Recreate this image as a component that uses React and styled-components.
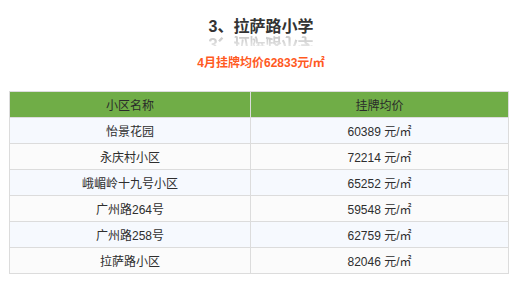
import React from "react";
import styled, { createGlobalStyle } from "styled-components";

const Global = createGlobalStyle`
  html, body { margin: 0; padding: 0; background: #fff; }
  body { font-family: "Liberation Sans", "Noto Sans CJK SC", sans-serif; }
`;

const Page = styled.div`
  width: 514px;
  padding: 17px 5px 0 9px;
  box-sizing: border-box;
`;

const Heading = styled.div`
  display: flex;
  flex-direction: column;
  align-items: center;
  padding-left: 4px;
`;

const Title = styled.div`
  font-size: 16px;
  line-height: 20px;
  font-weight: bold;
  color: #333;
`;

const Reflection = styled.div`
  margin-top: -4px;
  font-size: 16px;
  line-height: 20px;
  font-weight: bold;
  height: 13px;
  overflow: hidden;
  display: flex;
  align-items: flex-start;
  & > span {
    display: block;
    transform: scaleY(-1);
    color: #cdcdcd;
    -webkit-mask-image: linear-gradient(to top, rgba(0,0,0,1) 0%, rgba(0,0,0,1) 30%, rgba(0,0,0,0.6) 60%);
    mask-image: linear-gradient(to top, rgba(0,0,0,1) 0%, rgba(0,0,0,1) 30%, rgba(0,0,0,0.6) 60%);
  }
`;

const Subtitle = styled.div`
  margin-top: 9px;
  font-size: 12px;
  line-height: 16px;
  font-weight: bold;
  color: #ff5a1f;
`;

const Table = styled.table`
  margin-top: 20px;
  width: 500px;
  border-collapse: collapse;
  border: 1px solid #dcdcdc;
  font-size: 12px;
  color: #333;
  table-layout: fixed;
`;

const Th = styled.th`
  height: 25px;
  padding: 0;
  background: #70ad47;
  color: #2a2a2a;
  font-weight: normal;
  font-size: 12px;
  border: 1px solid #dcdcdc;
`;

const Tr = styled.tr`
  background: ${(p) => (p.$odd ? "#f6f9fe" : "#fbfbfb")};
`;

const Td = styled.td`
  height: 25px;
  padding: 0;
  text-align: center;
  color: #2e2e2e;
  border: 1px solid #dcdcdc;
`;

const rows = [
  ["怡景花园", "60389"],
  ["永庆村小区", "72214"],
  ["峨嵋岭十九号小区", "65252"],
  ["广州路264号", "59548"],
  ["广州路258号", "62759"],
  ["拉萨路小区", "82046"],
];

export default function App() {
  return (
    <>
      <Global />
      <Page>
        <Heading>
          <Title>3、拉萨路小学</Title>
          <Reflection aria-hidden="true">
            <span>3、拉萨路小学</span>
          </Reflection>
          <Subtitle>4月挂牌均价62833元/㎡</Subtitle>
        </Heading>
        <Table>
          <colgroup>
            <col style={{ width: "241px" }} />
            <col />
          </colgroup>
          <thead>
            <tr>
              <Th>小区名称</Th>
              <Th>挂牌均价</Th>
            </tr>
          </thead>
          <tbody>
            {rows.map(([name, price], i) => (
              <Tr key={name} $odd={i % 2 === 0}>
                <Td>{name}</Td>
                <Td>{price} 元/㎡</Td>
              </Tr>
            ))}
          </tbody>
        </Table>
      </Page>
    </>
  );
}
